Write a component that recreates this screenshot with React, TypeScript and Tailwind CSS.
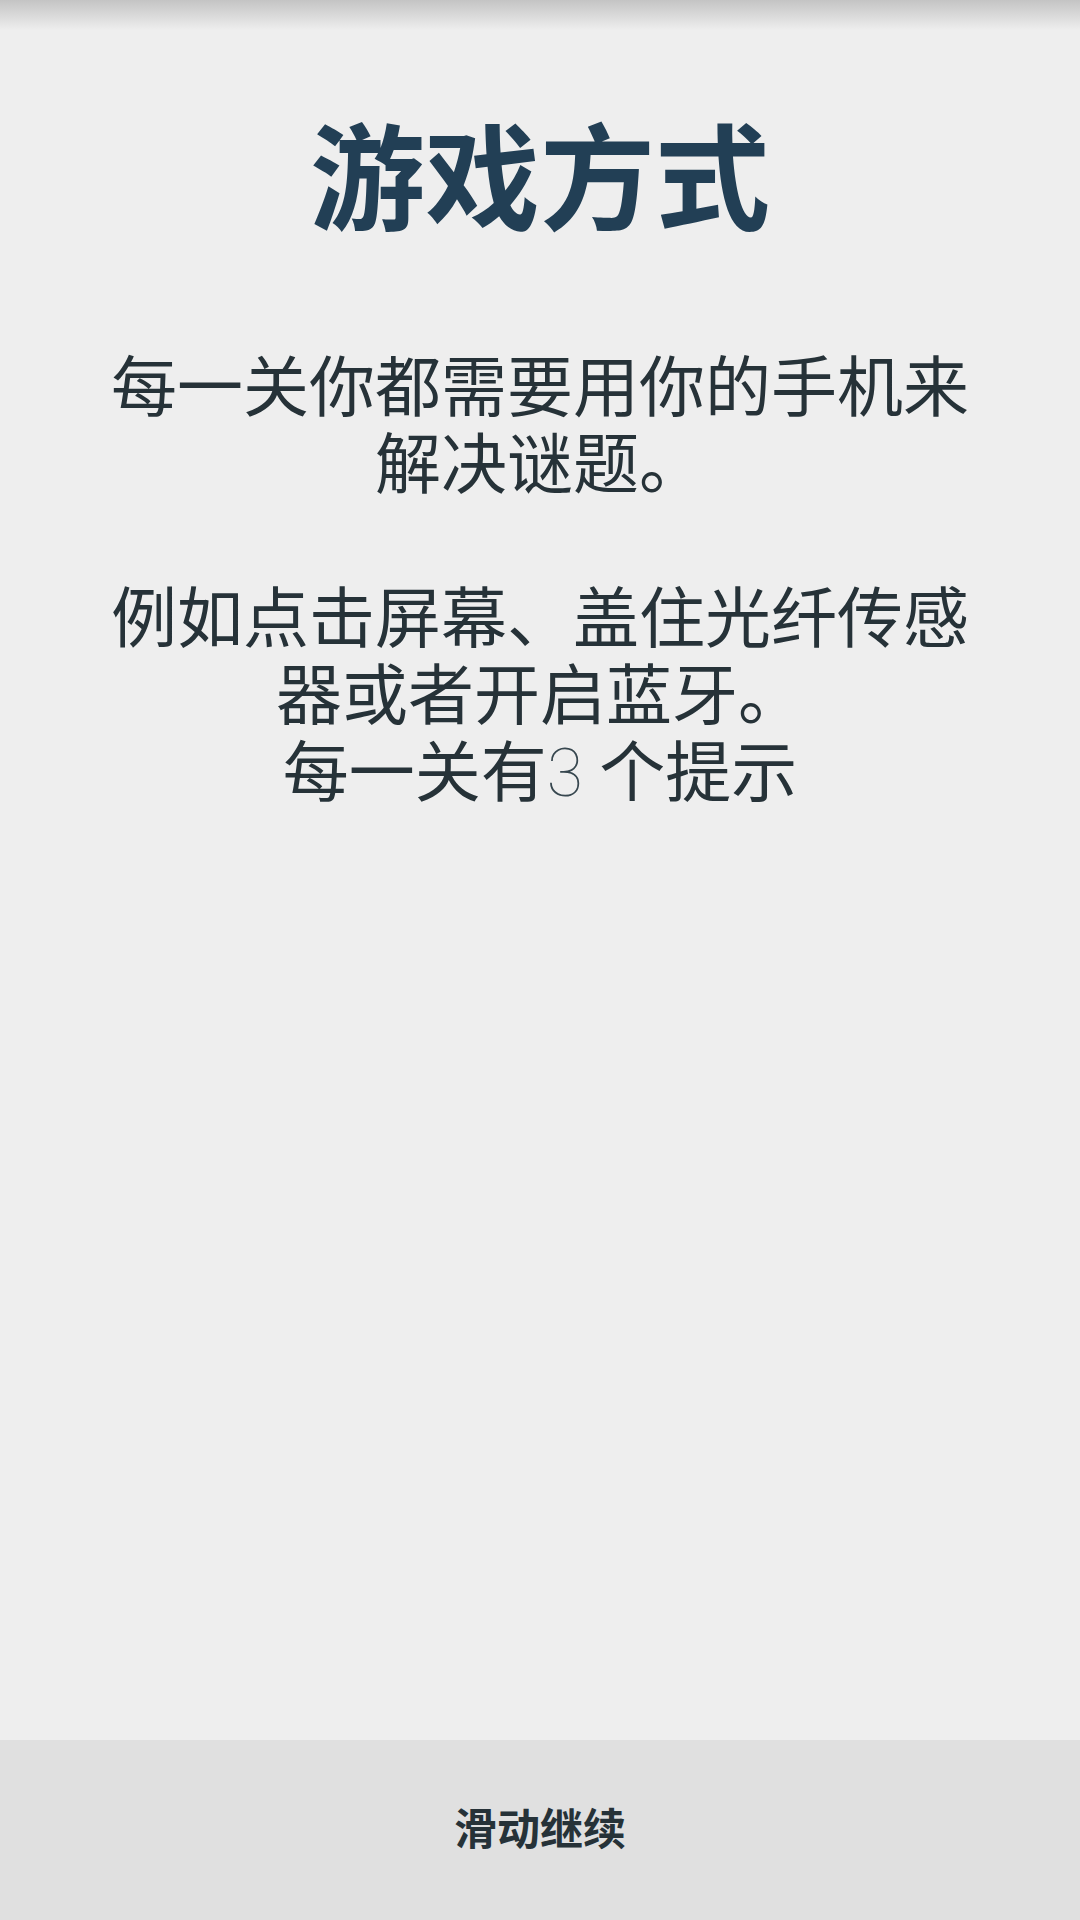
export default function App() {
  return (
    <div
      className="w-[1080px] h-[1920px] flex flex-col bg-[#eeeeee] overflow-hidden"
      style={{ fontFamily: "Roboto, 'Noto Sans CJK SC', sans-serif" }}
    >
      {/* Top shadow */}
      <div className="h-[30px] shrink-0 bg-gradient-to-b from-[#c4c4c4] to-[#eeeeee]" />

      <div className="flex-1 flex flex-col items-center">
        <h1 className="mt-[85px] text-[115px] leading-[134px] font-bold text-[#223f55]">
          游戏方式
        </h1>

        <p className="mt-[101px] w-[900px] text-center text-[66px] leading-[77px] font-normal text-[#263238] whitespace-pre-line">
          {'每一关你都需要用你的手机来解决谜题。\n\n例如点击屏幕、盖住光纤传感器或者开启蓝牙。\n每一关有'}
          <span className="font-thin text-[#37474f]" style={{ fontFamily: 'Roboto, sans-serif' }}>3</span>
          {' 个提示'}
        </p>
      </div>

      {/* Bottom bar */}
      <div className="h-[180px] shrink-0 bg-[#e0e0e0] flex items-center justify-center">
        <span className="text-[43px] font-bold text-[#263238]">滑动继续</span>
      </div>
    </div>
  )
}
